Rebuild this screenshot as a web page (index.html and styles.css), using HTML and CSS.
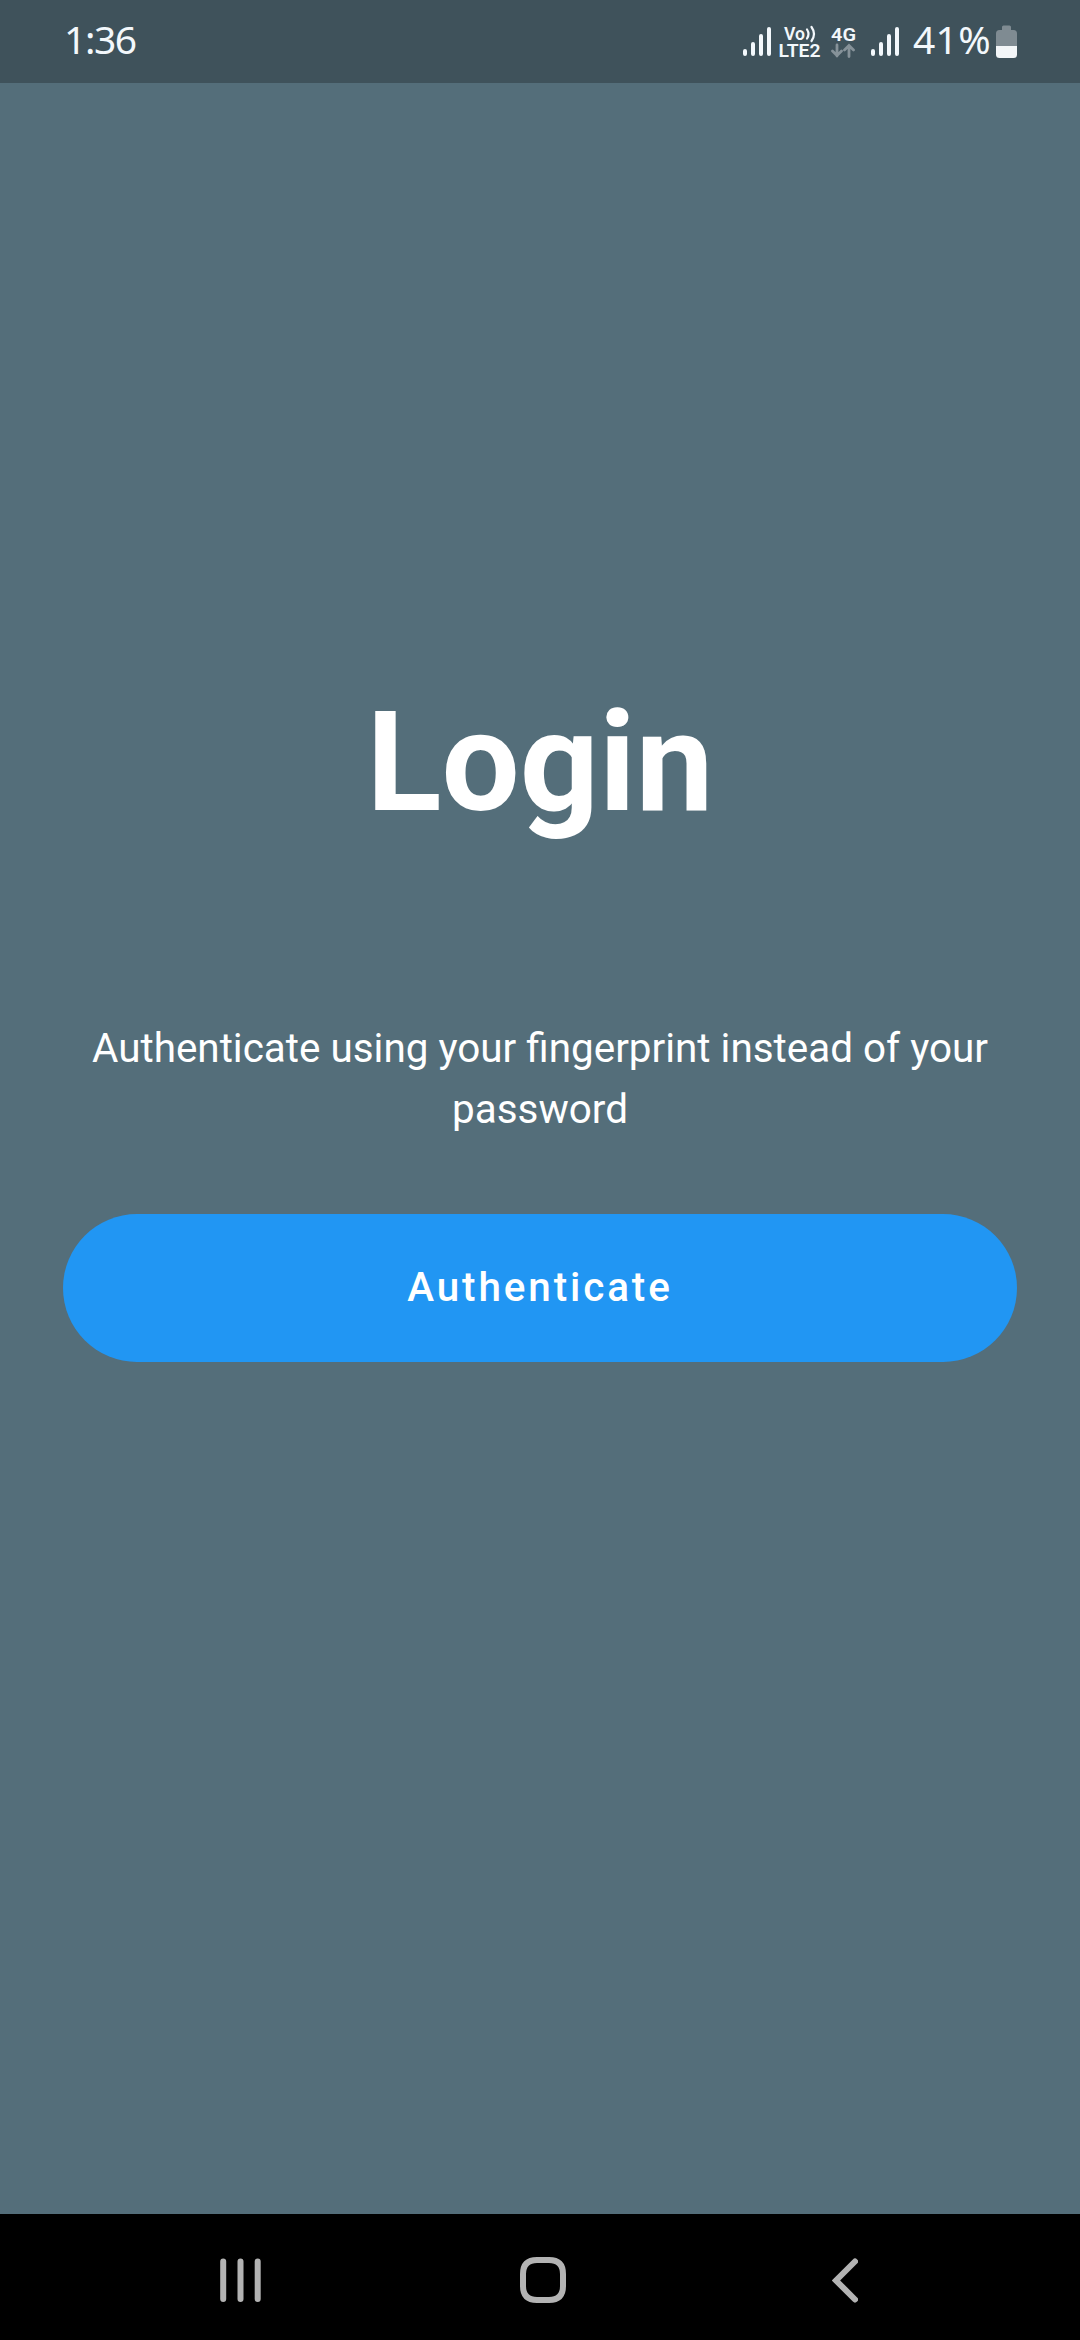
FILE: index.html
```html
<!DOCTYPE html>
<html lang="en">
<head>
<meta charset="utf-8">
<title>Login</title>
<link rel="stylesheet" href="styles.css">
</head>
<body>
<div class="screen">
  <header class="status-bar">
    <span class="clock">1:36</span>
    <div class="indicators">
      <svg class="signal" width="28" height="30" viewBox="0 0 28 30"><path d="M2 24v3M10 17v10M18 9v18M26 2v25"/></svg>
      <svg class="network volte" width="44" height="40" viewBox="0 0 44 40">
        <text x="5" y="16.500" textLength="21" lengthAdjust="spacingAndGlyphs">Vo</text>
        <path d="M28 6.500q3 4.500 0 9M32.500 4q5 7 0 14"/>
        <text x="-.5" y="34" textLength="42" lengthAdjust="spacingAndGlyphs">LTE2</text>
      </svg>
      <svg class="network mobile" width="25" height="40" viewBox="0 0 25 40">
        <text class="generation" x="0" y="17.500" textLength="25" lengthAdjust="spacingAndGlyphs">4G</text>
        <path class="arrows" d="M6 22v11M1.500 28L6 32.500l4.500-4.500M18 33.500V23M13.500 27L18 22.500l4.500 4.500"/>
      </svg>
      <svg class="signal" width="28" height="30" viewBox="0 0 28 30"><path d="M2 24v3M10 17v10M18 9v18M26 2v25"/></svg>
      <span class="percent">41%</span>
      <svg class="battery" width="21" height="33" viewBox="0 0 21 33">
        <path class="empty" d="M0 21V8.500Q0 5 3.500 5H6V2Q6 0.500 7.500 0.500h6Q15 .5 15 2V5h2.500Q21 5 21 8.500V21z"/>
        <path class="charge" d="M0 21h21v8.500q0 3.500-3.500 3.500h-14Q0 33 0 29.500z"/>
      </svg>
    </div>
  </header>
  <main class="login">
    <h1 class="title">Login</h1>
    <p class="hint">Authenticate using your fingerprint instead of your password</p>
    <button class="submit" type="button">Authenticate</button>
  </main>
  <nav class="nav-bar">
    <svg class="recents" width="42" height="46" viewBox="0 0 42 46"><path d="M3.200 4.500v37.500M20.500 4.500v37.500M37.700 4.500v37.500"/></svg>
    <svg class="home" width="46" height="46" viewBox="0 0 46 46"><path d="M17 3h12Q43 3 43 17v12Q43 43 29 43H17Q3 43 3 29V17Q3 3 17 3z"/></svg>
    <svg class="back" width="26" height="46" viewBox="0 0 26 46"><path d="M23 4.500L4 23.500l19 19"/></svg>
  </nav>
</div>
</body>
</html>
```
FILE: styles.css
```css
body {
  margin: 0;
  font-family: Roboto, sans-serif;
  color: #fff;
}

.screen {
  display: flex;
  flex-direction: column;
  width: 1080px;
  height: 2340px;
  background: #546e7a;
}

.status-bar {
  box-sizing: border-box;
  display: flex;
  justify-content: space-between;
  height: 83px;
  padding: 0 63px 0 64px;
  background: #3f525b;
  color: #f3f8fc;
}

.clock {
  font: 400 39px/78px "Noto Sans", sans-serif;
  letter-spacing: -1.400px;
}

.indicators {
  display: flex;
  align-items: flex-start;
}

.signal {
  margin-top: 27px;
  fill: none;
  stroke: #f3f8fc;
  stroke-width: 4;
  stroke-linecap: round;
}

.network {
  margin-top: 23px;
  fill: #f3f8fc;
  font: 600 18px Roboto, sans-serif;
}

.network .generation {
  font-size: 18.500px;
}

.network path {
  fill: none;
  stroke: #f3f8fc;
  stroke-width: 2.200;
  stroke-linecap: round;
}

.network .arrows {
  stroke: #869299;
  stroke-width: 2.800;
}

.volte {
  margin-left: 8px;
}

.mobile {
  margin: 23px 15px 0 8px;
}

.percent {
  width: 78px;
  margin-left: 14px;
  margin-right: 5px;
  font: 400 39px/78px "Noto Sans", sans-serif;
  letter-spacing: 0.300px;
}

.battery {
  margin-top: 25px;
}

.battery .empty {
  fill: #7f8b92;
}

.battery .charge {
  fill: #f3f6f8;
}

.login {
  flex: 1;
  display: flex;
  flex-direction: column;
  padding: 599px 63px 0;
}

.title {
  margin: 0;
  font-size: 138.600px;
  font-weight: 700;
  line-height: 162px;
  text-align: center;
}

.hint {
  margin: 174px 0 0;
  font-size: 40.425px;
  line-height: 61px;
  text-align: center;
}

.submit {
  height: 148px;
  margin-top: 74px;
  padding: 0 0 2px;
  border: 0;
  border-radius: 74px;
  background: #2196f3;
  color: #fff;
  font: 500 40.425px Roboto, sans-serif;
  letter-spacing: 2.890px;
}

.nav-bar {
  box-sizing: border-box;
  display: flex;
  height: 126px;
  padding: 43px 222px 0 220px;
  background: #000;
}

.nav-bar svg {
  fill: none;
  stroke: #b3b3b3;
  stroke-width: 6;
  stroke-linecap: round;
}

.home {
  margin: 0 266px 0 258px;
}
```
